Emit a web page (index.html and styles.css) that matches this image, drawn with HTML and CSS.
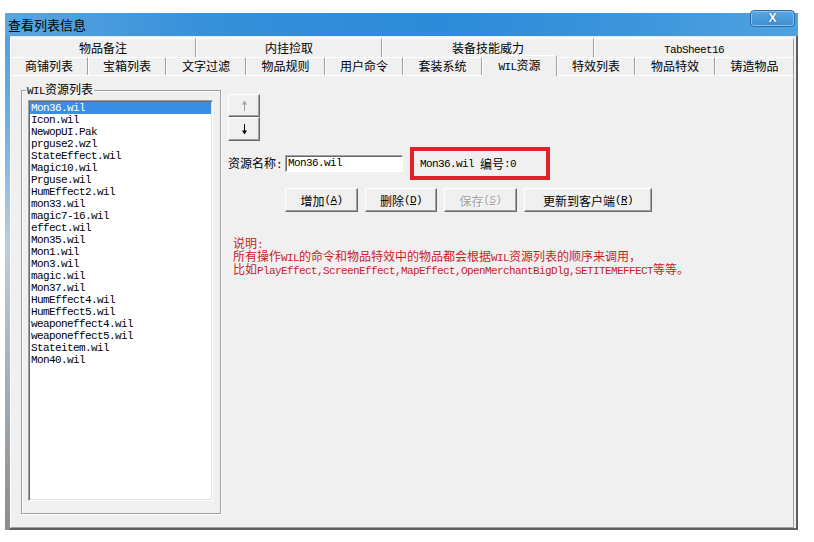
FILE: index.html
```html
<!DOCTYPE html>
<html lang="zh-CN">
    <head>
        <meta charset="UTF-8">
        <title>查看列表信息</title>
        <link rel="stylesheet" href="styles.css">
    </head>
    <body>
        <div class="window">
            <div class="titlebar">
                <span class="title">查看列表信息</span>
                <div class="close">X</div>
            </div>
            <div class="client">
                <div class="tabs">
                    <div class="tabrow back">
                        <div class="tab">物品备注</div>
                        <div class="tab">内挂捡取</div>
                        <div class="tab">装备技能威力</div>
                        <div class="tab"><span class="en">TabSheet16</span></div>
                    </div>
                    <div class="tabrow front">
                        <div class="tab">商铺列表</div>
                        <div class="tab">宝箱列表</div>
                        <div class="tab">文字过滤</div>
                        <div class="tab">物品规则</div>
                        <div class="tab">用户命令</div>
                        <div class="tab">套装系统</div>
                        <div class="tab active"><span class="en">WIL</span>资源</div>
                        <div class="tab">特效列表</div>
                        <div class="tab">物品特效</div>
                        <div class="tab">铸造物品</div>
                    </div>
                    <div class="panel">
                        <fieldset class="group">
                            <legend><span class="en">WIL</span>资源列表</legend>
                            <ul class="listbox en">
                                <li class="sel">Mon36.wil</li>
                                <li>Icon.wil</li>
                                <li>NewopUI.Pak</li>
                                <li>prguse2.wzl</li>
                                <li>StateEffect.wil</li>
                                <li>Magic10.wil</li>
                                <li>Prguse.wil</li>
                                <li>HumEffect2.wil</li>
                                <li>mon33.wil</li>
                                <li>magic7-16.wil</li>
                                <li>effect.wil</li>
                                <li>Mon35.wil</li>
                                <li>Mon1.wil</li>
                                <li>Mon3.wil</li>
                                <li>magic.wil</li>
                                <li>Mon37.wil</li>
                                <li>HumEffect4.wil</li>
                                <li>HumEffect5.wil</li>
                                <li>weaponeffect4.wil</li>
                                <li>weaponeffect5.wil</li>
                                <li>Stateitem.wil</li>
                                <li>Mon40.wil</li>
                            </ul>
                        </fieldset>
                        <div class="side">
                            <div class="updown">
                                <div class="btn arrow up">
                                    <svg width="7" height="11" viewBox="0 0 7 11"><path d="M3.5 3V11" stroke="#a0a0a0"/><path d="M1 4.5L3.5 0.5L6 4.5Z" fill="#a0a0a0"/></svg>
                                </div>
                                <div class="btn arrow down">
                                    <svg width="7" height="11" viewBox="0 0 7 11"><path d="M3.5 0V8" stroke="#000"/><path d="M1 6.5L3.5 10.5L6 6.5Z" fill="#000"/></svg>
                                </div>
                            </div>
                            <div class="name-row">
                                <label>资源名称<span class="en">:</span></label>
                                <div class="input en">Mon36.wil</div>
                                <div class="info"><span class="en">Mon36.wil&nbsp;</span>编号<span class="en">:0</span></div>
                            </div>
                            <div class="actions">
                                <button class="btn">增加<span class="en">(<u>A</u>)</span></button>
                                <button class="btn narrow">删除<span class="en">(<u>D</u>)</span></button>
                                <button class="btn disabled">保存<span class="en">(<u>S</u>)</span></button>
                                <button class="btn wide">更新到客户端<span class="en">(<u>R</u>)</span></button>
                            </div>
                            <div class="note">
                                <div class="line">说明<span class="en">:</span></div>
                                <div class="line">所有操作<span class="en">WIL</span>的命令和物品特效中的物品都会根据<span class="en">WIL</span>资源列表的顺序来调用，</div>
                                <div class="line">比如<span class="en">PlayEffect,ScreenEffect,MapEffect,OpenMerchantBigDlg,SETITEMEFFECT</span>等等。</div>
                            </div>
                        </div>
                    </div>
                </div>
            </div>
        </div>
    </body>
</html>
```
FILE: styles.css
```css
* {
    box-sizing: border-box;
}
body {
    background-color: #FFFFFF;
    color: #000000;
    font-family: "Noto Sans CJK SC", "Liberation Sans", sans-serif;
    font-size: 12px;
    margin: 0px;
}
.en {
    font-family: "Liberation Mono", "Noto Sans CJK SC", monospace;
    font-size: 11px;
    letter-spacing: -0.6px;
}
.window {
    background: linear-gradient(to bottom, #4D9DE0 0%, #6AAEE3 20%, #B9CFE0 45%, #8C8C8C 100%);
    display: flex;
    flex-direction: column;
    height: 517px;
    margin: 13px 0px 0px 5px;
    width: 793px;
}
.titlebar {
    align-items: center;
    background: linear-gradient(to right, #5AA6E0, #3690DA 25%, #2C8AD8 55%, #3D96DC 80%, #4FA2E0);
    display: flex;
    height: 23px;
    justify-content: space-between;
    padding: 0px 3px;
    .title {
        font-size: 13px;
        line-height: 14px;
    }
    .close {
        align-self: flex-start;
        background: linear-gradient(#5BA6E2, #3B8FD6);
        border: 1px solid #2A6AA8;
        border-radius: 4px;
        box-shadow: inset 0px 0px 0px 1px #8CC3EE;
        color: #FFFFFF;
        font: bold 12px/15px "Liberation Sans", sans-serif;
        height: 17px;
        margin-top: -3px;
        text-align: center;
        text-shadow: 0px 0px 2px #1B4F84;
        width: 45px;
    }
}
.client {
    background-color: #F0F0F0;
    border-bottom: 2px solid #5E5E5E;
    border-right: 2px solid #5E5E5E;
    display: flex;
    flex: 1;
    flex-direction: column;
    margin-left: 5px;
    padding-top: 2px;
}
.tabs {
    display: flex;
    flex: 1;
    flex-direction: column;
    margin-right: 2px;
}
.tabrow {
    display: grid;
    .tab {
        background-color: #F0F0F0;
        border-left: 1px solid #FFFFFF;
        border-right: 1px solid #A0A0A0;
        border-top: 1px solid #FFFFFF;
        text-align: center;
        white-space: nowrap;
    }
}
.back {
    grid-template-columns: 186px 186px 212px 200px;
    height: 19px;
    .tab {
        line-height: 17px;
    }
}
.front {
    grid-template-columns: 78px 78px 80px 79px 78px 79px 75px 78px 80px 79px;
    height: 18px;
    .tab {
        line-height: 16px;
    }
    .active {
        line-height: 18px;
        margin: -2px 0px -1px;
        position: relative;
        z-index: 1;
    }
}
.panel {
    border: 1px solid;
    border-color: #FFFFFF #A0A0A0 #A0A0A0 #FFFFFF;
    display: flex;
    flex: 1;
    padding: 6px 0px 0px 10px;
}
.group {
    align-self: flex-start;
    border: 1px solid #A0A0A0;
    box-shadow: inset 1px 1px 0px #FFFFFF, 1px 1px 0px #FFFFFF;
    margin: 0px;
    min-width: 0px;
    padding: 2px 7px 12px 6px;
    width: 200px;
    legend {
        background-color: #F0F0F0;
        line-height: 13px;
        margin-left: -2px;
        padding: 0px 1px;
    }
}
.listbox {
    background-color: #FFFFFF;
    border: 1px solid;
    border-color: #A0A0A0 #FFFFFF #FFFFFF #A0A0A0;
    box-shadow: inset 1px 1px 0px #696969, inset -1px -1px 0px #E3E3E3;
    height: 401px;
    list-style: none;
    margin: 0px;
    padding: 1px;
    width: 185px;
    li {
        height: 12px;
        line-height: 12px;
        padding-left: 1px;
        white-space: nowrap;
    }
    .sel {
        background-color: #3A8EE6;
        color: #FFFFFF;
    }
}
.side {
    align-items: flex-start;
    display: flex;
    flex-direction: column;
    margin-left: 7px;
    padding-top: 12px;
}
.btn {
    align-items: center;
    background-color: #F0F0F0;
    border: 1px solid;
    border-color: #FFFFFF #696969 #696969 #FFFFFF;
    box-shadow: inset -1px -1px 0px #A0A0A0;
    color: #000000;
    display: flex;
    justify-content: center;
}
.updown {
    display: flex;
    flex-direction: column;
    .arrow {
        height: 23px;
        width: 32px;
    }
    .down {
        height: 24px;
    }
}
.name-row {
    align-items: center;
    display: flex;
    margin-top: 6px;
    label {
        line-height: 14px;
    }
    .input {
        background-color: #FFFFFF;
        border: 1px solid;
        border-color: #A0A0A0 #FFFFFF #FFFFFF #A0A0A0;
        box-shadow: inset 1px 1px 0px #696969;
        height: 17px;
        line-height: 15px;
        margin-left: 3px;
        padding: 0px 2px;
        width: 118px;
    }
    .info {
        align-items: center;
        border: 4px solid #E0232B;
        display: flex;
        height: 33px;
        margin-left: 7px;
        padding-left: 6px;
        white-space: nowrap;
        width: 140px;
    }
}
.actions {
    display: flex;
    gap: 7px;
    margin: 8px 0px 0px 57px;
    button {
        font-family: inherit;
        font-size: 12px;
        height: 24px;
        padding: 0px;
        width: 73px;
    }
    .narrow {
        width: 72px;
    }
    .wide {
        width: 128px;
    }
    .disabled {
        color: #A0A0A0;
        text-shadow: 1px 1px 0px #FFFFFF;
    }
}
.note {
    color: #C81E1E;
    margin: 24px 0px 0px 5px;
    white-space: nowrap;
    .line {
        height: 13px;
        line-height: 13px;
    }
}
```
